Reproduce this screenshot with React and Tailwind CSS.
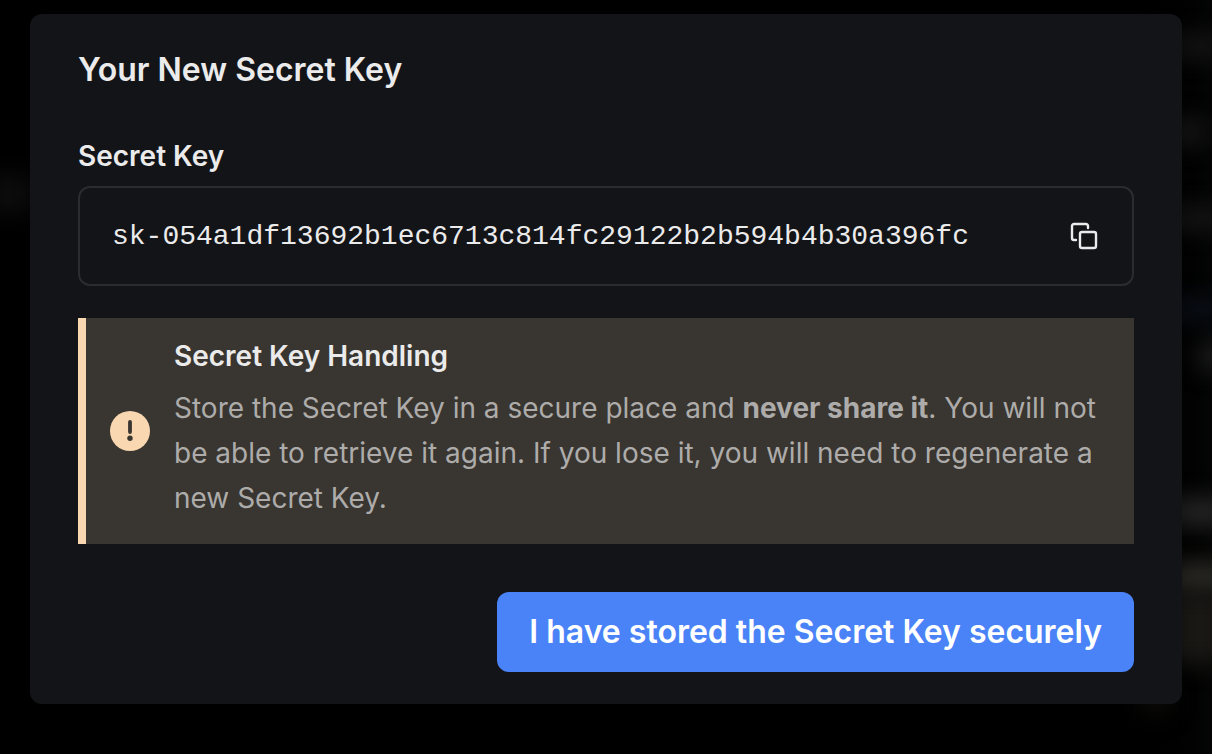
import { useState } from 'react'

function CopyIcon() {
  return (
    <svg width="32" height="32" viewBox="0 0 32 32" fill="none" stroke="currentColor" strokeWidth="2.4" strokeLinecap="round" strokeLinejoin="round" aria-hidden="true">
      <rect x="12" y="12" width="16" height="16" rx="2" />
      <path d="M20 8V6a2 2 0 0 0-2-2H6a2 2 0 0 0-2 2v12a2 2 0 0 0 2 2h2" />
    </svg>
  )
}

function WarningIcon() {
  return (
    <svg className="size-10 shrink-0" viewBox="0 0 40 40" aria-hidden="true">
      <circle cx="20" cy="20" r="20" fill="#f9d7b1" />
      <path d="M20 11v10" stroke="#393530" strokeWidth="3.8" strokeLinecap="round" />
      <circle cx="20" cy="27.3" r="2.7" fill="#393530" />
    </svg>
  )
}

function Backdrop() {
  return (
    <div className="pointer-events-none absolute inset-0 flex justify-between overflow-hidden" aria-hidden="true">
      <div className="-ml-4 flex w-12 flex-col pt-44">
        <div className="h-9 bg-[#0d0d0d] blur-md" />
      </div>
      <div className="-mr-4 flex w-24 flex-col items-end bg-gradient-to-l from-[#070808] to-black pt-9">
        <div className="h-5 w-14 bg-[#171717] blur-md" />
        <div className="mt-16 mr-6 h-6 w-7 bg-[#1b1b1b] blur-md" />
        <div className="mt-16 h-5 w-14 bg-[#181818] blur-md" />
        <div className="mt-18 h-5 w-14 bg-[#0b101a] blur-md" />
        <div className="mt-6 h-6 w-7 bg-[#222222] blur-md" />
        <div className="mt-33 h-6 w-14 bg-[#2a2a2a] blur-md" />
        <div className="mt-10 h-7 w-14 bg-[#302f2a] blur-md" />
        <div className="h-18 w-14 bg-[#191815] blur-md" />
        <div className="mt-4 mr-15 h-8 w-6 bg-[#100f0c] blur-md" />
      </div>
    </div>
  )
}

export default function App() {
  const [secretKey] = useState('sk-054a1df13692b1ec6713c814fc29122b2b594b4b30a396fc')

  return (
    <div className="relative min-h-screen bg-black px-[30px] pt-[14px] pb-[50px] font-['Inter',sans-serif] text-[#ebebeb]">
      <Backdrop />
      <main role="dialog" aria-labelledby="dialog-title" className="relative flex flex-col rounded-xl bg-[#131418] px-12 pt-9 pb-8">
        <h1 id="dialog-title" className="text-[32px] leading-10 font-semibold">Your New Secret Key</h1>

        <label htmlFor="secret-key" className="mt-12 text-[28px] leading-9 font-semibold">Secret Key</label>
        <div className="mt-3 flex items-center gap-4 rounded-xl border-2 border-[#2b2c30] px-8 py-6">
          <input
            id="secret-key"
            readOnly
            value={secretKey}
            className="h-12 min-w-0 flex-1 bg-transparent font-['Liberation_Mono',monospace] text-[28px] outline-none"
          />
          <button type="button" aria-label="Copy secret key" onClick={() => navigator.clipboard?.writeText(secretKey)}>
            <CopyIcon />
          </button>
        </div>

        <section className="mt-8 flex items-center gap-6 border-l-8 border-[#f9d7b1] bg-[#393530] px-6 py-5">
          <WarningIcon />
          <div className="flex flex-col gap-3 pb-[3px]">
            <h2 className="text-[28px] leading-9 font-semibold">Secret Key Handling</h2>
            <p className="text-[28px] leading-[45px] text-[#adacaa]">
              Store the Secret Key in a secure place and <strong className="font-bold">never share it</strong>. You will not
              be able to retrieve it again. If you lose it, you will need to regenerate a new Secret Key.
            </p>
          </div>
        </section>

        <div className="mt-12 flex justify-end">
          <button type="button" className="h-20 rounded-xl bg-[#4a82f8] px-8 text-[32px] font-semibold text-white">
            I have stored the Secret Key securely
          </button>
        </div>
      </main>
    </div>
  )
}
